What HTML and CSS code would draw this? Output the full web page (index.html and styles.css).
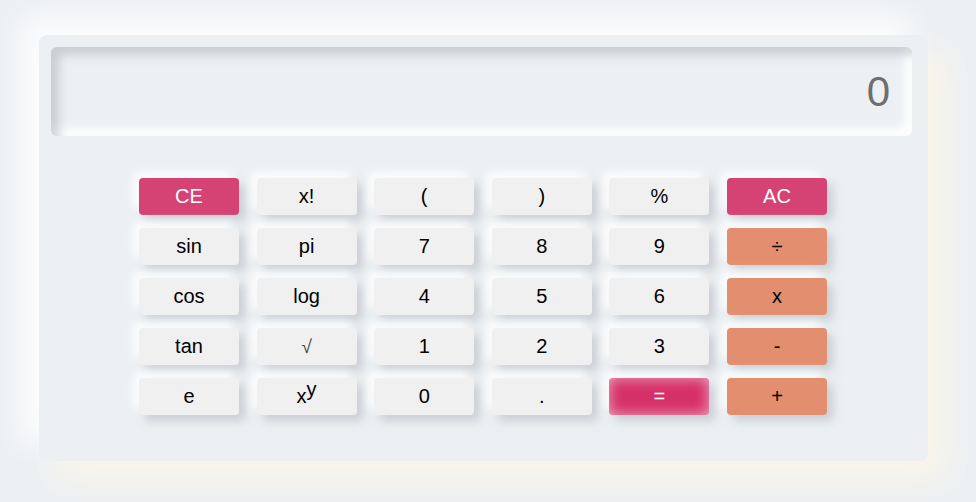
FILE: index.html
```html
<!DOCTYPE html>
<html>
<head>
<meta charset="utf-8">
<link rel="stylesheet" href="styles.css">
</head>
<body>
<div class="calc">
  <div class="display">0</div>
  <div class="keys">
    <button class="key red">CE</button>
    <button class="key">x!</button>
    <button class="key">(</button>
    <button class="key">)</button>
    <button class="key">%</button>
    <button class="key red">AC</button>
    <button class="key">sin</button>
    <button class="key">pi</button>
    <button class="key">7</button>
    <button class="key">8</button>
    <button class="key">9</button>
    <button class="key op">÷</button>
    <button class="key">cos</button>
    <button class="key">log</button>
    <button class="key">4</button>
    <button class="key">5</button>
    <button class="key">6</button>
    <button class="key op">x</button>
    <button class="key">tan</button>
    <button class="key sqrt">√</button>
    <button class="key">1</button>
    <button class="key">2</button>
    <button class="key">3</button>
    <button class="key op">-</button>
    <button class="key">e</button>
    <button class="key">x<sup>y</sup></button>
    <button class="key">0</button>
    <button class="key">.</button>
    <button class="key eq">=</button>
    <button class="key op">+</button>
  </div>
</div>
</body>
</html>
```
FILE: styles.css
```css
html, body {
  margin: 0;
  padding: 0;
  background: #edf0f3;
  font-family: "Liberation Sans", Arial, sans-serif;
}
body {
  padding: 35px 0 0 39px;
  height: 502px;
  box-sizing: border-box;
  overflow: hidden;
}
.calc {
  width: 889px;
  height: 426px;
  box-sizing: border-box;
  background: #ecf0f3;
  border-radius: 8px;
  padding: 12px 16px 0 12px;
  box-shadow: -18px -18px 30px rgba(255, 255, 255, 0.85), 18px 18px 30px rgba(250, 244, 233, 0.95);
}
.display {
  height: 89px;
  box-sizing: border-box;
  border-radius: 6px;
  background: #ecf0f3;
  box-shadow: inset 8px 8px 10px rgba(170, 175, 180, 0.5), inset -8px -8px 10px rgba(255, 255, 255, 0.9);
  text-align: right;
  padding-right: 22px;
  font-size: 42px;
  line-height: 89px;
  color: #6e6e6e;
}
.keys {
  display: grid;
  grid-template-columns: repeat(6, 100px);
  grid-auto-rows: 37px;
  column-gap: 17.6px;
  row-gap: 13px;
  justify-content: center;
  margin-top: 42px;
  padding-left: 3px;
}
.key {
  border: none;
  border-radius: 4px;
  background: #f0f0f0;
  font-family: "Liberation Sans", Arial, sans-serif;
  font-size: 20px;
  color: #000;
  padding: 0;
  box-shadow: 6px 6px 10px rgba(170, 175, 185, 0.5), -6px -6px 10px rgba(255, 255, 255, 0.9);
}
.key sup {
  font-size: 20px;
  vertical-align: 0;
  position: relative;
  top: -7px;
  margin-left: 0;
}
.key.red {
  background: #d44373;
  color: #fff;
}
.key.op {
  background: #e28e6f;
  color: #000;
}
.key.eq {
  background: #d63068;
  color: #fff;
  box-shadow: inset 0 0 14px rgba(255, 255, 255, 0.6), 6px 6px 10px rgba(170, 175, 185, 0.5), -6px -6px 10px rgba(255, 255, 255, 0.9);
}
.key.sqrt {
  color: #4a4a4a;
  font-size: 19px;
}
```
